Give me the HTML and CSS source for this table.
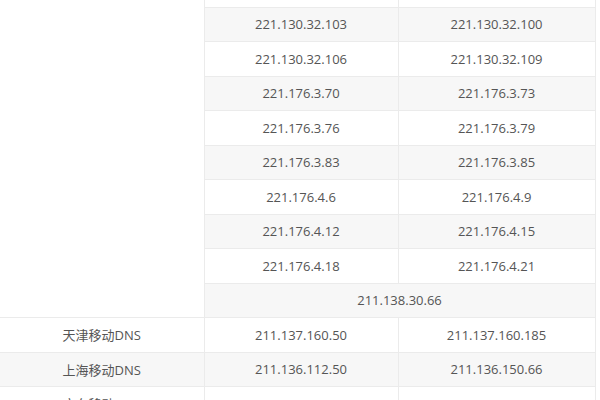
FILE: index.html
```html
<!DOCTYPE html>
<html lang="zh">
<head>
<meta charset="utf-8">
<title>DNS</title>
<link rel="stylesheet" href="styles.css">
</head>
<body>
<div class="viewport">
<table class="dns">
  <colgroup><col class="c1"><col class="c2"><col class="c3"></colgroup>
  <tbody>
    <tr><td class="region" rowspan="10"></td><td>221.130.32.97</td><td>221.130.32.94</td></tr>
    <tr class="alt"><td>221.130.32.103</td><td>221.130.32.100</td></tr>
    <tr><td>221.130.32.106</td><td>221.130.32.109</td></tr>
    <tr class="alt"><td>221.176.3.70</td><td>221.176.3.73</td></tr>
    <tr><td>221.176.3.76</td><td>221.176.3.79</td></tr>
    <tr class="alt"><td>221.176.3.83</td><td>221.176.3.85</td></tr>
    <tr><td>221.176.4.6</td><td>221.176.4.9</td></tr>
    <tr class="alt"><td>221.176.4.12</td><td>221.176.4.15</td></tr>
    <tr><td>221.176.4.18</td><td>221.176.4.21</td></tr>
    <tr class="alt"><td colspan="2">211.138.30.66</td></tr>
    <tr><td>天津移动DNS</td><td>211.137.160.50</td><td>211.137.160.185</td></tr>
    <tr class="alt"><td>上海移动DNS</td><td>211.136.112.50</td><td>211.136.150.66</td></tr>
    <tr><td>广东移动DNS</td><td>211.136.192.6</td><td>211.136.20.204</td></tr>
  </tbody>
</table>
</div>
</body>
</html>
```
FILE: styles.css
```css
html, body {
  margin: 0;
  padding: 0;
  background: #ffffff;
}
.viewport {
  width: 600px;
  height: 400px;
  overflow: hidden;
}
.dns {
  margin-top: -28px;
  width: 595px;
  border-collapse: collapse;
  table-layout: fixed;
  font-family: "Open Sans", "Noto Sans CJK SC", sans-serif;
  font-size: 13px;
  color: #555555;
}
.c1 { width: 204px; }
.c2 { width: 194px; }
.c3 { width: 197px; }
.dns td {
  height: 34.5px;
  padding: 0;
  box-sizing: border-box;
  text-align: center;
  vertical-align: middle;
  border: 1px solid #ebebeb;
  border-left: none;
}
.dns td.region { background: #ffffff; }
.dns tr.alt td { background: #f7f7f7; }
.dns tr.alt td.region { background: #ffffff; }
```
